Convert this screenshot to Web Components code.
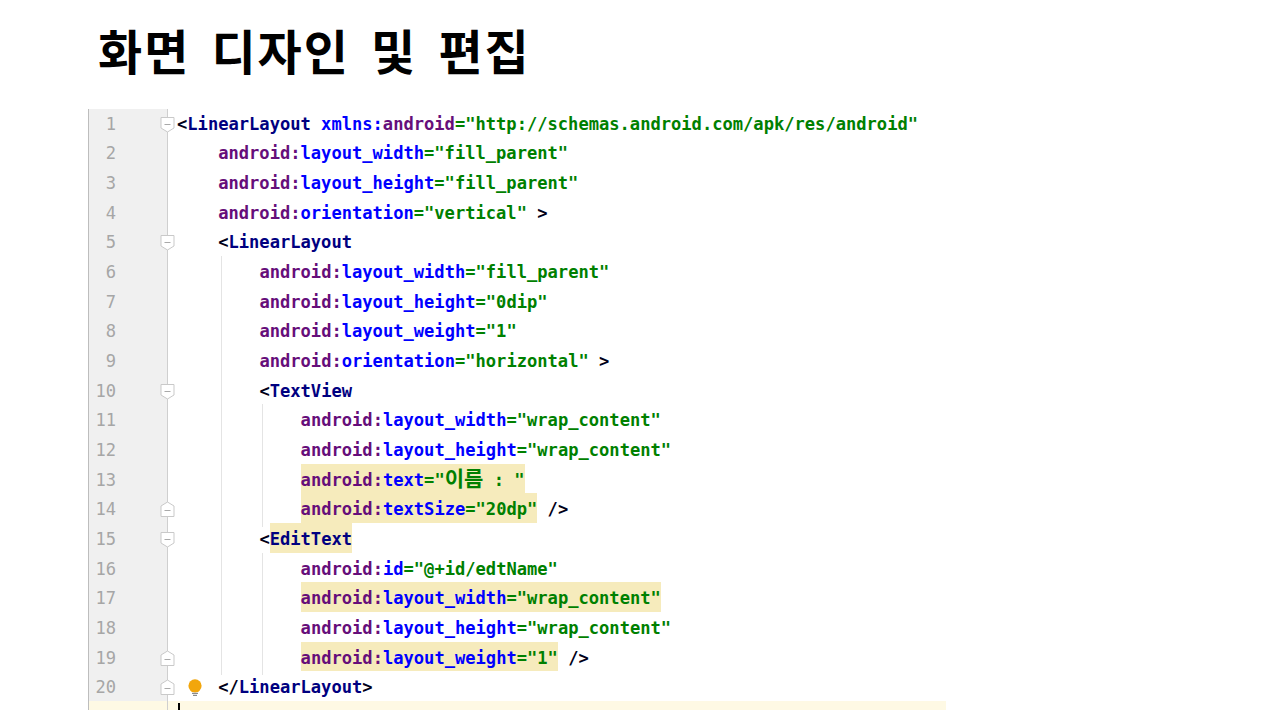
<!DOCTYPE html>
<html lang="ko">
<head>
<meta charset="utf-8">
<title>화면 디자인 및 편집</title>
<style>
html, body { margin: 0; background: #fff; }
</style>
</head>
<body>
<slide-page>
	<span slot="title">화면 디자인 및 편집</span>
	<code-editor>
		<code-line n="1" fold="open"><xml-tag name="LinearLayout"></xml-tag> <xml-attr prefix="xmlns" name="android" value="http://schemas.android.com/apk/res/android"></xml-attr></code-line>
		<code-line n="2" indent="1"><xml-attr name="layout_width" value="fill_parent"></xml-attr></code-line>
		<code-line n="3" indent="1"><xml-attr name="layout_height" value="fill_parent"></xml-attr></code-line>
		<code-line n="4" indent="1"><xml-attr name="orientation" value="vertical"></xml-attr> &gt;</code-line>
		<code-line n="5" indent="1" fold="open"><xml-tag name="LinearLayout"></xml-tag></code-line>
		<code-line n="6" indent="2" guides="1"><xml-attr name="layout_width" value="fill_parent"></xml-attr></code-line>
		<code-line n="7" indent="2" guides="1"><xml-attr name="layout_height" value="0dip"></xml-attr></code-line>
		<code-line n="8" indent="2" guides="1"><xml-attr name="layout_weight" value="1"></xml-attr></code-line>
		<code-line n="9" indent="2" guides="1"><xml-attr name="orientation" value="horizontal"></xml-attr> &gt;</code-line>
		<code-line n="10" indent="2" guides="1" fold="open"><xml-tag name="TextView"></xml-tag></code-line>
		<code-line n="11" indent="3" guides="2"><xml-attr name="layout_width" value="wrap_content"></xml-attr></code-line>
		<code-line n="12" indent="3" guides="2"><xml-attr name="layout_height" value="wrap_content"></xml-attr></code-line>
		<code-line n="13" indent="3" guides="2"><xml-attr hl name="text" value="이름 : "></xml-attr></code-line>
		<code-line n="14" indent="3" guides="2" fold="close"><xml-attr hl name="textSize" value="20dp"></xml-attr> /&gt;</code-line>
		<code-line n="15" indent="2" guides="1" fold="open"><xml-tag hl name="EditText"></xml-tag></code-line>
		<code-line n="16" indent="3" guides="2"><xml-attr name="id" value="@+id/edtName"></xml-attr></code-line>
		<code-line n="17" indent="3" guides="2"><xml-attr hl name="layout_width" value="wrap_content"></xml-attr></code-line>
		<code-line n="18" indent="3" guides="2"><xml-attr name="layout_height" value="wrap_content"></xml-attr></code-line>
		<code-line n="19" indent="3" guides="2" fold="close"><xml-attr hl name="layout_weight" value="1"></xml-attr> /&gt;</code-line>
		<code-line n="20" indent="1" fold="close" bulb><xml-tag closing name="LinearLayout"></xml-tag></code-line>
		<code-line current></code-line>
	</code-editor>
</slide-page>

<script>
class SlidePage extends HTMLElement {
	constructor() {
		super();
		this.shadowDOM = this.attachShadow({ mode: "open" });
	}
	connectedCallback() {
		this.shadowDOM.innerHTML = `
		<style>
		:host {
			display: block;
			width: 1280px;
			height: 720px;
			overflow: hidden;
			background: #fff;
		}
		h1 {
			margin: 0;
			height: 109px;
			box-sizing: border-box;
			padding: 16px 0 0 98px;
			font: 700 48px/66px "Noto Sans CJK KR", sans-serif;
			letter-spacing: 2px;
			word-spacing: 5.7px;
			color: #000;
		}
		.body { padding-left: 88px; }
		</style>
		<h1><slot name="title"></slot></h1>
		<div class="body"><slot></slot></div>
		`;
	}
}

class CodeEditor extends HTMLElement {
	constructor() {
		super();
		this.shadowDOM = this.attachShadow({ mode: "open" });
	}
	connectedCallback() {
		this.shadowDOM.innerHTML = `
		<style>
		:host {
			display: block;
			width: 858px;
			height: 601px;
			overflow: hidden;
			--row: 29.68px;
		}
		.lines {
			display: flex;
			flex-direction: column;
			margin-top: -1.5px;
		}
		</style>
		<div class="lines"><slot></slot></div>
		`;
	}
}

class CodeLine extends HTMLElement {
	constructor() {
		super();
		this.shadowDOM = this.attachShadow({ mode: "open" });
	}
	connectedCallback() {
		const n = this.getAttribute("n") || "";
		const fold = this.getAttribute("fold");
		const guides = Number(this.getAttribute("guides") || 0);
		const indent = Number(this.getAttribute("indent") || 0);
		const foldIcon = fold
			? `<svg class="fold ${fold}" width="15" height="18" viewBox="0 0 15 18">
				<path d="${fold === "open"
					? "M1 1.5H14V12L7.5 16L1 12Z"
					: "M1 16.5H14V6L7.5 2L1 6Z"}" fill="#fff" stroke="#c9c9c9"/>
				<path d="M4.5 ${fold === "open" ? 8.5 : 10.5}H10.5" stroke="#a9a9a9"/>
			</svg>`
			: "";
		const bulb = this.hasAttribute("bulb")
			? `<svg class="bulb" width="16" height="18" viewBox="0 0 16 18">
				<circle cx="8" cy="6.8" r="6.6" fill="#f2a60c"/>
				<path d="M4.5 11H11.5V13H4.5Z" fill="#f2a60c"/>
				<path d="M5 14.4H11M6 16.4H10" stroke="#8a8a8a" stroke-width="1.2"/>
			</svg>`
			: "";
		const caret = this.hasAttribute("current") ? `<i class="caret"></i>` : "";
		let guideCss = "none";
		if (guides > 0) {
			const list = [];
			for (let i = 0; i < guides; i++) {
				list.push(`linear-gradient(#e4e4e4, #e4e4e4) ${53 + i * 41.2}px 0 / 1px 100% no-repeat`);
			}
			guideCss = list.join(", ");
		}
		this.shadowDOM.innerHTML = `
		<style>
		:host {
			display: grid;
			grid-template-columns: 80px 1fr;
			height: var(--row);
			flex: none;
			font: 700 17.1px/calc(var(--row) + 4px) "DejaVu Sans Mono", monospace;
			color: #000018;
			white-space: pre;
		}
		.gutter {
			position: relative;
			box-sizing: border-box;
			background: #f0f0f0;
			border-left: 1px solid #bdbdbd;
			border-right: 1px solid #cfcfcf;
			padding-right: 51px;
			text-align: right;
			font-weight: 400;
			color: #a6a6a6;
		}
		:host([current]) .gutter { background: #fef9e4; }
		:host([current]) .code { background: #fef9e4; }
		.code {
			position: relative;
			background: ${guideCss};
			padding-left: ${9 + indent * 41.2}px;
		}
		.fold { position: absolute; right: -8px; top: 8px; }
		.fold.close { top: 7px; }
		.bulb { position: absolute; left: 19px; top: 8px; }
		.caret {
			position: absolute;
			left: 9.5px;
			top: 2px;
			width: 2px;
			height: 10px;
			background: #000;
		}
		</style>
		<div class="gutter">${n}${foldIcon}</div><div class="code">${bulb}${caret}<slot></slot></div>`;
	}
}

class XmlTag extends HTMLElement {
	constructor() {
		super();
		this.shadowDOM = this.attachShadow({ mode: "open" });
	}
	connectedCallback() {
		const closing = this.hasAttribute("closing");
		const name = this.getAttribute("name");
		const hl = this.hasAttribute("hl") ? "hl" : "";
		this.shadowDOM.innerHTML = `<style>
		.name { color: #000080; }
		.hl {
			display: inline-block;
			height: var(--row);
			background: #f6ebbc;
		}
		</style>&lt;${closing ? "/" : ""}<span class="name ${hl}">${name}</span>${closing ? "&gt;" : ""}`;
	}
}

class XmlAttr extends HTMLElement {
	constructor() {
		super();
		this.shadowDOM = this.attachShadow({ mode: "open" });
	}
	connectedCallback() {
		const prefix = this.getAttribute("prefix");
		const name = this.getAttribute("name");
		const value = this.getAttribute("value");
		const parts = value.split(/([\uac00-\ud7a3]+)/).map((part) =>
			/[\uac00-\ud7a3]/.test(part) ? `<span class="ko">${part}</span>` : part
		).join("");
		const head = prefix
			? `<span class="name">${prefix}:</span><span class="ns">${name}</span>`
			: `<span class="ns">android:</span><span class="name">${name}</span>`;
		this.shadowDOM.innerHTML = `<style>
		:host { display: inline-block; height: var(--row); }
		:host([hl]) { background: #f6ebbc; }
		.ns { color: #660e7a; }
		.name { color: #0000ff; }
		.value { color: #008000; }
		.ko { font: 700 21px/1 "Noto Sans CJK KR", sans-serif; }
		</style>${head}<span class="value">="${parts}"</span>`;
	}
}

customElements.define("slide-page", SlidePage);
customElements.define("code-editor", CodeEditor);
customElements.define("code-line", CodeLine);
customElements.define("xml-tag", XmlTag);
customElements.define("xml-attr", XmlAttr);
</script>
</body>
</html>
